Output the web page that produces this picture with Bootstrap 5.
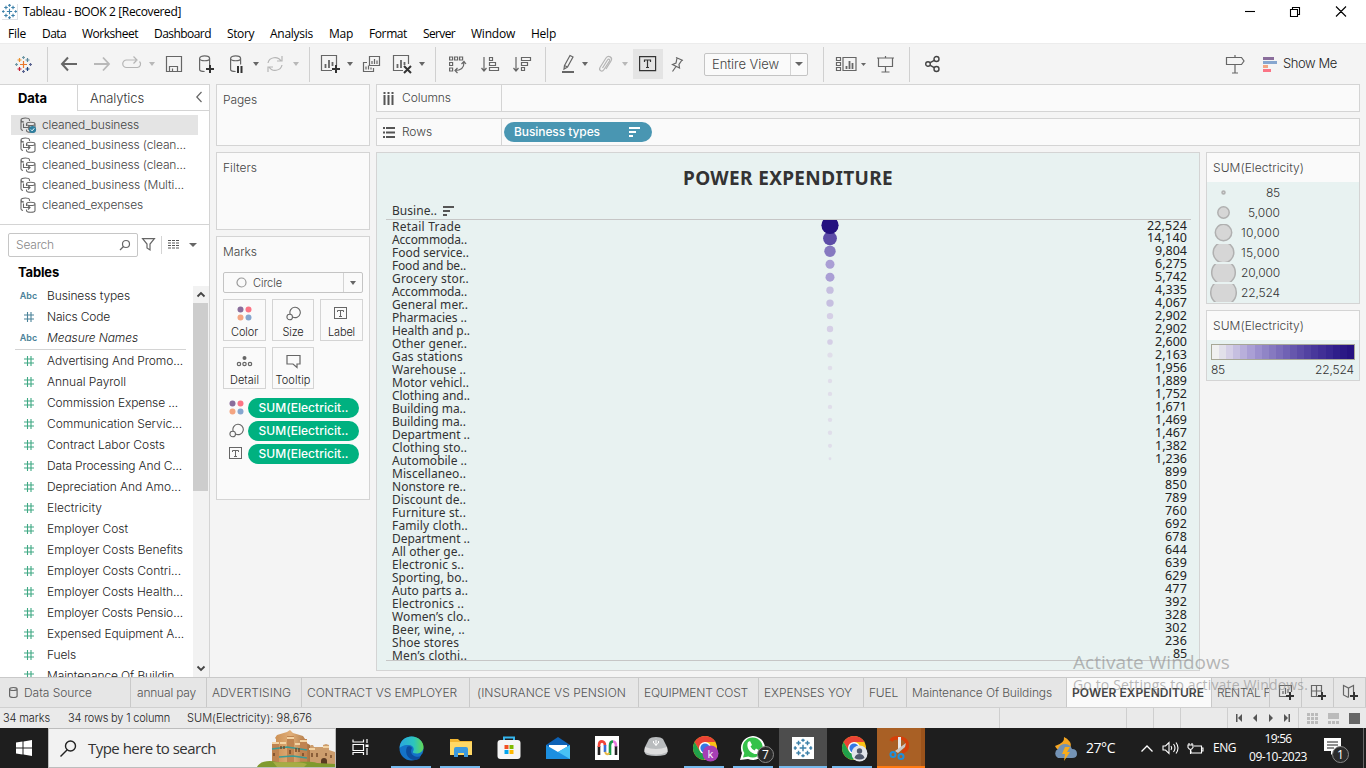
<!DOCTYPE html>
<html lang="en">
<head>
<meta charset="utf-8">
<title>Tableau - BOOK 2 [Recovered]</title>
<meta name="viewport" content="width=device-width, initial-scale=1">
<link href="https://cdn.jsdelivr.net/npm/bootstrap@5.3.0/dist/css/bootstrap.min.css" rel="stylesheet">
<style>
html,body{height:768px;overflow:hidden}
body{font:12px/16px "Open Sans","Noto Sans",sans-serif;color:#333;background:#f4f4f4;width:1366px}
.work,.booktabs,.status,.toolbar{font-family:Inter,"Open Sans",sans-serif;font-weight:300}
svg{display:block;flex:none;overflow:visible}
.t{white-space:pre;display:inline-block;flex:none}
.titlebar{height:23px;background:#fff;color:#000;padding-left:2px}
.menubar{height:20px;background:#fff;color:#000;display:grid;grid-template-columns:34px 40px 72px 73px 43px 59px 40px 54px 48px 60px 40px;padding:2px 0 0 8px;align-items:center;justify-items:start}
.toolbar{height:41px;display:grid;grid-template-columns:46px 2px 42px 24px 36px 4px 40px 24px 36px 4px 34px 8px 18px 24px 16px 26px 36px 4px 22px 22px 44px 20px 26px 20px 14px 26px 14px 32px 26px 132px 2px 54px 14px 34px 12px 1fr 24px 106px 13px;justify-items:center;align-items:center;border-top:1px solid #ececec}
.toolbar>*{flex:none}
.vsep{width:1px;height:35px;background:#d0d0d0}
.caret{width:0;height:0;border:3px solid transparent;border-top:4px solid #666;border-bottom:0}
.caret.off{border-top-color:#b8b8b8}
.caret.big{border-width:4px 4px 0}
.ico{fill:none;stroke:#666;stroke-width:1.2}
.work{height:593px}
.pane{width:210px;background:#fff;border-right:1px solid #d4d4d4;border-top:1px solid #d4d4d4}
.ptabs{height:26px}
.ptabs .tdata{width:77px;padding-left:18px;font-weight:700;color:#000}
.ptabs .tana{border-left:1px solid #d4d4d4;border-bottom:1px solid #d4d4d4;padding:0 7px 0 12px}
.sources{padding:4px 0 0 11px;height:113px}
.src{height:20px;width:187px;padding-left:9px;color:#444}
.src.on{background:#e4e4e4}
.src .t{margin-left:6px}
.rule{height:1px;background:#d4d4d4}
.find{height:23px;margin:8px 0 0 8px}
.sbox{width:130px;height:24px;border:1px solid #c6c6c6;border-radius:2px;padding:0 7px;color:#888}
.tables{height:29px;margin-top:1px;padding:7px 0 0 18px;font-weight:700;color:#000}
.fields{height:391px}
.flist{width:193px;overflow:hidden}
.fld{height:21px;padding:0 0 1px 47px;position:relative;color:#222}
.fld i{position:absolute;left:20px;width:17px;text-align:center;display:flex;justify-content:center;font-style:normal}
.abc{font-size:9px;font-weight:600;color:#4a8299}
.sbar{width:16px;background:#f2f2f2}
.sbar .btnz{height:17px;width:15px}
.sbar .thumb{height:188px;width:15px;background:#cdcdcd}
.panel{border:1px solid #d4d4d4;background:#fafafa}
.shelves{width:154px;margin-left:6px;gap:6px;color:#444}
.shelves>.panel{padding:7px 6px}
.markbtn{height:42px;border:1px solid #d4d4d4;background:#fafafa;color:#222;padding-top:4px}
.markgrid{display:grid;grid-template-columns:43px 42px 43px;column-gap:6px;row-gap:6px;margin-top:6px}
.sel{border:1px solid #c4c4c4;border-radius:2px;background:#fafafa}
.pill{border-radius:10px;height:20px;color:#fff}
.pill .t{font-weight:500}
.pill.green{background:#00b180;width:111px}
.pill.blue{background:#4996b2;width:148px;margin-left:2px}
.enc{height:23px;padding-left:6px}
.enc>svg{width:15px}
.main{margin-left:6px;width:984px;gap:6px}
.shelf{height:28px}
.shelf .hd{width:125px;border-right:1px solid #d4d4d4;padding-left:6px;color:#444}
.viz{width:824px;height:519px;background:#e8f2f1;border:1px solid #d4d4d4;font-weight:400}
.viz h1{font:700 19px/24px "Noto Sans","Open Sans",sans-serif;color:#333;margin:0;padding-top:13px;height:49px}
.colhd{height:17px;padding-left:15px;font-family:"Noto Sans",sans-serif}
.plot{margin:0 8px 0 9px;border-top:1px solid #c6c6c6;border-bottom:1px solid #c6c6c6;height:442px;position:relative}
.vrow{height:13px;padding:0 4px 0 6px;line-height:13px}
.dots + .vrow{margin-top:-1px}
.vrow .t{font-family:"Noto Sans",sans-serif;font-size:12px}
.vrow .t:first-child{margin-top:1px}
.vrow .t:last-child{font-size:12.5px;color:#222}
.vrow + .vrow .t:last-child{margin-top:-1px}
.dots{position:absolute;left:434px;top:0}
.legend .lh{height:29px;padding:7px 6px 0;color:#444}
.legend .lb{background:#e8f2f1}
.sized{height:20px}
.sized .t{margin-left:auto;margin-right:79px}
.ramp{height:16px;margin:0 4px;border:1px solid #a7a796}
.ramp span{flex:1}
.booktabs{height:30px;border-top:1px solid #c9c9c9;background:#e6e6e6;color:#555;display:grid;grid-template-columns:131px 76px 95px 168px 169px 120px 105px 43px 160px 145px 58px 32px 32px 32px}
.booktabs>div{border-right:1px solid #c9c9c9;padding-left:5px;display:flex;align-items:center;overflow:hidden}
.booktabs>.act{background:#fafafa;color:#444;font-weight:600}
.status{height:21px;border-top:1px solid #d0d0d0;background:#eaeaea;display:grid;grid-template-columns:68px 119px 813px 127px 27px 27px 47px 71px 67px}
.status>div{display:flex;align-items:center;height:20px;color:#222}
.status>.b{border-right:1px solid #cfcfcf}
.taskbar{height:40px;background:#1e1e1e;color:#fff}
.startbox{width:48px}
.tsearch{width:288px;background:#f2f2f2;border:1px solid #bdbdbd;color:#333;padding-left:11px;font-size:15px}
.app{width:49px;flex:none}
.app::after{content:"";position:absolute;bottom:0;height:2px;left:4px;right:5px}
.app.run::after{background:#76b9ed}
.app.wide{width:48px}
.app.wide::after{left:0;right:0}
.app.orange::after{background:#ff7a12;right:-4px}
.num{position:absolute;width:17px;height:17px;border-radius:50%;background:#2b2b2b;border:1px solid #888;font-size:12px;line-height:15px;text-align:center}
.watermark{position:absolute;left:1073px;top:650px;color:rgba(140,140,140,.62);pointer-events:none}
</style>
</head>
<body>
<svg width="0" height="0" class="position-absolute">
<defs>
<symbol id="hash" viewBox="0 0 10 11"><path d="M3.500 0v10M7 0v10M0 3h10M0 7h10" fill="none" stroke="currentColor" stroke-width="1.100"/></symbol>
<symbol id="cyl2" viewBox="0 0 16 16"><g fill="none" stroke="#666" stroke-width="1.100"><path d="M3 13.500C1.500 13.300 1 12.800 1 12V3M9.500 4V3c0-2.600-8.500-2.600-8.500 0 0 1.500 1.500 2 3 2"/><path d="M6.500 7c0-2.300 8.500-2.300 8.500 0v6.500c0 2.300-8.500 2.300-8.500 0v-1M6.500 7c0 2 8.500 2 8.500 0M6.500 7v2"/><path d="M3.500 6.500v4h6.500M8 8.500l2 2-2 2"/></g></symbol>
<symbol id="plus" viewBox="0 0 8 8"><path d="M4 0v8M0 4h8" stroke="#333" stroke-width="2"/></symbol>
<symbol id="four" viewBox="0 0 15 15"><circle cx="3.500" cy="3.500" r="3" fill="#8a6d9b"/><circle cx="11.500" cy="3.500" r="3" fill="#fb7485"/><circle cx="3.500" cy="11.500" r="3" fill="#f4a582"/><circle cx="11.500" cy="11.500" r="3" fill="#86a6cf"/></symbol>
<symbol id="sizes" viewBox="0 0 15 15"><g fill="none" stroke="#666" stroke-width="1.100"><path d="M4.200 8.200A5.200 5.200 0 1 1 6.600 11"/><circle cx="3.700" cy="11" r="2.800"/></g></symbol>
<symbol id="tbox" viewBox="0 0 14 13"><rect x=".5" y=".5" width="12" height="11" fill="none" stroke="#666"/><path d="M3.500 5V3.500h6V5M6.500 3.500v6M5 9.500h3" fill="none" stroke="#666"/></symbol>
<symbol id="sortbars" viewBox="0 0 11 10"><path d="M0 1h11M0 5h7M0 9h4" stroke="currentColor" stroke-width="2"/></symbol>
<symbol id="spark" viewBox="0 0 17 17"><path d="M8.500 5.500v6M5.500 8.500h6M4.500 2v4M2.500 4h4M12.500 2v4M10.500 4h4M4.500 11v4M2.500 13h4M12.500 11v4M10.500 13h4M8.500 0v3M7 1.500h3M8.500 14v3M7 15.500h3M0 8.500h3M1.500 7v3M14 8.500h3M15.500 7v3" stroke="#3f82aa" stroke-width="1.300"/></symbol>
<symbol id="chrome" viewBox="0 0 26 26"><circle cx="13" cy="13" r="12" fill="#fbc116"/><path d="M2.600 7A12 12 0 0 1 23.400 7H13l-5.200 9z" fill="#ea4335"/><path d="M2.600 7A12 12 0 0 0 12 25l6.200-9L13 19 7.800 16z" fill="#21a04a"/><circle cx="13" cy="13" r="6" fill="#fff"/><circle cx="13" cy="13" r="4.600" fill="#3478e5"/></symbol>
</defs></svg>

<header>
<div class="titlebar d-flex align-items-center">
<svg width="16" height="16" class="border border-top-0 border-start-0"><use href="#spark" x="0" y="0" width="15" height="15"/></svg>
<span class="t" style="margin-left:5px"><span class="t" data-w="158">Tableau - BOOK 2 [Recovered]</span></span>
<svg class="ms-auto me-3" width="106" height="12"><g fill="none" stroke="#000" stroke-width="1.100"><path d="M1 5.500h10"/><path d="M46.500 3.500h7v7h-7zM48.500 3.500v-2h7v7h-2M92 .5l10 10M102 .5l-10 10"/></g></svg>
</div>
<nav class="menubar">
<span class="t" data-w="18">File</span><span class="t" data-w="24">Data</span><span class="t" data-w="56">Worksheet</span><span class="t" data-w="57">Dashboard</span><span class="t" data-w="27">Story</span><span class="t" data-w="43">Analysis</span><span class="t" data-w="24">Map</span><span class="t" data-w="38">Format</span><span class="t" data-w="32">Server</span><span class="t" data-w="44">Window</span><span class="t" data-w="25">Help</span>
</nav>
</header>

<div class="toolbar">
<svg width="17" height="17"><g stroke-width="1.200"><path d="M8.500 5v7M5 8.500h7" stroke="#e9762b"/><path d="M4.500 2v4M2.500 4h4" stroke="#eb912c"/><path d="M12.500 2v4M10.500 4h4" stroke="#59879b"/><path d="M4.500 11v4M2.500 13h4" stroke="#c72035"/><path d="M12.500 11v4M10.500 13h4" stroke="#1f447e"/><path d="M8.500 0v3M7 1.500h3M0 8.500h3M1.500 7v3" stroke="#7199a6"/><path d="M14 8.500h3M15.500 7v3M8.500 14v3M7 15.500h3" stroke="#5b6591"/></g></svg>
<span class="vsep"></span>
<svg width="16" height="14" class="ico" style="stroke-width:2"><path d="M16 7H1M7 .5L1 7l6 6.500"/></svg>
<svg width="16" height="14" class="ico" style="stroke-width:1.800;stroke:#b8b8b8"><path d="M0 7h15M9 .5L15 7l-6 6.500"/></svg>
<svg width="18" height="12" class="ico" style="stroke:#b5b5b5"><path d="M13 2H3.500a3.500 3.500 0 0 0 0 7.500h11a3.500 3.500 0 0 0 2-6M10.500-1.500L14 2l-3.500 3.500"/></svg>
<span class="caret off"></span>
<svg width="16" height="16" class="ico"><path d="M.5.5h15v15H.5zM3.500 15v-4.500h8V15M6.500 15v-2.500"/></svg>
<svg width="15" height="18" class="ico"><path d="M.6 3.500c0-3.600 10-3.600 10 0v7M.6 3.500c0 3 10 3 10 0M.6 3.500v11c0 1 2 2 5 2"/><use href="#plus" x="7" y="10" width="8" height="8"/></svg>
<svg width="12" height="18" class="ico"><path d="M.6 3.500c0-3.600 10-3.600 10 0v6M.6 3.500c0 3 10 3 10 0M.6 3.500v11c0 1 2 2 5 2"/><path d="M8 11v7M11.500 11v7" stroke="#333" stroke-width="2"/></svg>
<span class="caret"></span>
<svg width="18" height="16" class="ico" style="stroke:#b5b5b5"><path d="M2 7a7 6.500 0 0 1 13-2M16 0v5h-5M16 9a7 6.500 0 0 1-13 2M2 16v-5h5"/></svg>
<span class="caret off"></span>
<span class="vsep"></span>
<svg width="18" height="18" class="ico"><path d="M11 15.500H.5V.5h15V11"/><path d="M4.500 13V9M8 13V5M11.500 11V7" stroke-width="1.800"/><use href="#plus" x="11" y="10" width="8" height="8"/></svg>
<span class="caret"></span>
<svg width="17" height="16" class="ico"><path d="M6.500.5h10v9h-10zM4 6.500H.5v9h10V12M9 8V5M11.500 8V3M14 8V4.500M3 13.500v-3M5.500 13.500v-4M8 13.500V11.500"/></svg>
<svg width="18" height="18" class="ico"><path d="M10 15.500H.5V.5h15V9"/><path d="M4.500 13V9M8 13V5M11.500 10V7" stroke-width="1.800"/><path d="M11 11l7 7M18 11l-7 7" stroke="#333" stroke-width="2"/></svg>
<span class="caret"></span>
<span class="vsep"></span>
<svg width="17" height="17" class="ico"><path d="M.6 1h3v3h-3zM5.600 1h3v3h-3zM10.600 1h3v3h-3zM.6 6.500h3v3h-3zM.6 12h3v3h-3zM6 14.500c6 0 9-3 9-8M12.500 8L15 5.500 17 8M8.500 12L6 14.500 8.500 17"/></svg>
<svg width="18" height="15" class="ico"><path d="M3 0v14M.5 11L3 14l2.500-3M8.500.5h3v3h-3zM8.500 5.500h6v3h-6zM8.500 10.500h9v3h-9z"/></svg>
<svg width="18" height="15" class="ico"><path d="M3 0v14M.5 11L3 14l2.500-3M8.500.5h9v3h-9zM8.500 5.500h6v3h-6zM8.500 10.500h3v3h-3z"/></svg>
<span class="vsep"></span>
<svg width="14" height="18" class="ico"><path d="M3.500 10.500L9 .5l3 1.500-5.500 10-3.500 2zM3.500 10.500l3 1.500"/><path d="M1 17h12" stroke-width="2"/></svg>
<span class="caret"></span>
<svg width="13" height="16" class="ico" style="stroke:#b5b5b5"><path d="M3.500 12L8.500 4c1-1.500 2.800-.5 2 1L5 13.500c-2 3-5.500 1-4-2L7 2c2.500-3.500 7-.5 5 3l-5 8"/></svg>
<span class="caret off"></span>
<span class="d-flex align-items-center justify-content-center" style="width:30px;height:30px;background:#e4e4e4"><svg width="18" height="16" class="ico" style="stroke:#333"><path d="M.6.6h16v14H.6z"/><path d="M5.500 6V4h6v2M8.500 4v7.500M7 11.500h3"/></svg></span>
<svg width="13" height="15" class="ico"><path d="M5 .5l7 3M6 1L5 6 1.500 7.500l7 3.500L8 7.500l3-4.500M5 9.500L1.500 14.500"/></svg>
<span class="sel d-flex align-items-center" style="width:104px;height:23px"><span class="t" style="font-size:13px;color:#444;margin-left:7px;width:78px"><span class="t" data-w="67">Entire View</span></span><span style="width:1px;height:21px;background:#d4d4d4"></span><span class="caret big ms-1"></span></span>
<span class="vsep"></span>
<svg width="30" height="15" class="ico"><path d="M.5.5h4v3h-4zM.5 5.500h4v3h-4zM.5 10.500h4v3h-4zM7 .5h13v13H7z"/><path d="M10.500 12V9M13.500 12V4M16.500 12V6" stroke-width="1.800"/><path d="M25 6l2.500 3L30 6z" fill="#666" stroke="none"/></svg>
<svg width="17" height="17" class="ico"><path d="M0 2h17M1.500 2v8.500h14V2M8.500 0v2M8.500 10.500V16M4.500 16h8"/></svg>
<span class="vsep"></span>
<svg width="15" height="16" class="ico" style="stroke:#444;stroke-width:1.400"><circle cx="3" cy="8" r="2.300"/><circle cx="11.500" cy="3" r="2.500"/><circle cx="11.500" cy="13" r="2.500"/><path d="M5.200 6.700L9.300 4.300M5.200 9.300l4.100 2.400"/></svg>
<span></span>
<svg width="18" height="19" class="ico"><path d="M.5 2.500h15L18 6l-2.500 3.500H.5zM9 0v2.500M9 9.500V18M6 18h6"/></svg>
<span class="d-flex align-items-center"><svg width="14" height="15"><path d="M0 0h11v3H0z" fill="#8a6d9b"/><path d="M0 4h14v3H0z" fill="#86a6cf"/><path d="M0 8h5v3H0z" fill="#f4a582"/><path d="M0 12h8v3H0z" fill="#fb7485"/></svg><span class="t" data-w="54" style="font-size:13px;margin:-2px 0 0 6px;color:#222">Show Me</span></span>
<span></span>
</div>

<div class="work d-flex">
<aside class="pane d-flex flex-column">
<div class="ptabs d-flex"><div class="tdata d-flex align-items-center"><span class="t" data-w="29" style="font-size:13px">Data</span></div>
<div class="tana flex-fill d-flex align-items-center justify-content-between"><span class="t" data-w="54" style="font-size:13px">Analytics</span><svg width="6" height="10" class="ico" style="margin-top:-2px"><path d="M5.500 0L.8 5l4.700 5"/></svg></div></div>
<div class="sources" id="sources"></div>
<div class="rule"></div>
<div class="find d-flex align-items-center"><div class="sbox d-flex align-items-center justify-content-between"><span class="t" data-w="38">Search</span><svg width="10" height="10" class="ico"><circle cx="6" cy="4" r="3.500"/><path d="M3.500 6.500L0 10"/></svg></div>
<svg width="13" height="13" class="ico" style="margin-left:4px"><path d="M.6.6h11.800L8 6v6L5 10V6z"/></svg><span style="height:18px;width:1px;background:#d4d4d4;margin:0 6px"></span>
<svg width="12" height="10"><path d="M0 .5h12M0 3h12M0 5.500h12M0 8h12" stroke="#555" stroke-dasharray="3 1"/></svg><span class="caret big" style="margin-left:9px"></span></div>
<div class="tables"><span class="t" data-w="41" style="font-size:13px">Tables</span></div>
<div class="fields d-flex"><div class="flist" id="flist"></div>
<div class="sbar"><div class="btnz d-flex align-items-center justify-content-center"><svg width="8" height="5"><path d="M.5 4.500L4 1l3.500 3.500" fill="none" stroke="#444" stroke-width="1.800"/></svg></div><div class="thumb"></div><div class="btnz d-flex align-items-center justify-content-center" style="margin-top:169px"><svg width="8" height="5"><path d="M.5.5L4 4 7.500.5" fill="none" stroke="#444" stroke-width="1.800"/></svg></div></div></div>
</aside>

<section class="shelves d-flex flex-column">
<div class="panel" style="height:62px"><span class="t" data-w="34">Pages</span></div>
<div class="panel" style="height:78px"><span class="t" data-w="34">Filters</span></div>
<div class="panel" style="height:264px"><span class="t" data-w="34">Marks</span>
<div class="sel d-flex align-items-center" style="height:21px;margin-top:12px;padding-left:12px"><svg width="11" height="11" class="ico" style="stroke:#999"><circle cx="5.500" cy="5.500" r="4.500"/></svg><span class="t" style="margin-left:6px;width:90px;font-size:11px"><span class="t" data-w="29">Circle</span></span><span style="width:1px;height:19px;background:#d4d4d4"></span><span class="caret" style="margin-left:6px"></span></div>
<div class="markgrid">
<div class="markbtn d-flex flex-column align-items-center"><svg width="17" height="19"><use href="#four" x="1" y="2" width="15" height="15"/></svg><span class="t" data-w="27" style="font-size:11px;margin-top:1px">Color</span></div>
<div class="markbtn d-flex flex-column align-items-center"><svg width="17" height="19"><use href="#sizes" x="1" y="2" width="15" height="15"/></svg><span class="t" data-w="21" style="font-size:11px;margin-top:1px">Size</span></div>
<div class="markbtn d-flex flex-column align-items-center"><svg width="17" height="19"><use href="#tbox" x="1" y="3" width="14" height="13"/></svg><span class="t" data-w="27" style="font-size:11px;margin-top:1px">Label</span></div>
<div class="markbtn d-flex flex-column align-items-center"><svg width="17" height="19" class="ico"><circle cx="8.500" cy="6" r="2" fill="#666" stroke="none"/><circle cx="3" cy="12" r="1.700"/><circle cx="8.500" cy="12" r="1.700"/><circle cx="14" cy="12" r="1.700"/></svg><span class="t" data-w="29" style="font-size:11px;margin-top:1px">Detail</span></div>
<div class="markbtn d-flex flex-column align-items-center"><svg width="17" height="19" class="ico"><path d="M2 3.500h13v8.500h-3v3.500L8 12H2z"/></svg><span class="t" data-w="35" style="font-size:11px;margin-top:1px">Tooltip</span></div>
</div>
<div style="margin-top:7px">
<div class="enc d-flex align-items-center"><svg width="15" height="15"><use href="#four" width="15" height="15"/></svg><div class="pill green d-flex align-items-center justify-content-center ms-1"><span class="t" data-w="90">SUM(Electricit..</span></div></div>
<div class="enc d-flex align-items-center"><svg width="15" height="15"><use href="#sizes" width="15" height="15"/></svg><div class="pill green d-flex align-items-center justify-content-center ms-1"><span class="t" data-w="90">SUM(Electricit..</span></div></div>
<div class="enc d-flex align-items-center"><svg width="15" height="13"><use href="#tbox" width="14" height="13"/></svg><div class="pill green d-flex align-items-center justify-content-center ms-1"><span class="t" data-w="90">SUM(Electricit..</span></div></div>
</div></div>
</section>

<main class="main d-flex flex-column">
<div class="shelf panel d-flex"><div class="hd d-flex align-items-center"><svg width="12" height="13"><path d="M1.500 0v2M5.500 0v2M9.500 0v2M1.500 3v10M5.500 3v10M9.500 3v10" stroke="#555" stroke-width="2"/></svg><span class="t" data-w="49" style="margin-left:7px">Columns</span></div></div>
<div class="shelf panel d-flex align-items-center"><div class="hd d-flex align-items-center h-100"><svg width="12" height="11"><path d="M0 1h2M0 5.500h2M0 10h2M3 1h9M3 5.500h9M3 10h9" stroke="#555" stroke-width="1.800"/></svg><span class="t" data-w="30" style="margin-left:7px">Rows</span></div>
<div class="pill blue d-flex align-items-center justify-content-between" style="padding:0 12px 0 10px"><span class="t" data-w="86">Business types</span><svg width="11" height="10"><use href="#sortbars" width="11" height="10"/></svg></div></div>
<div class="d-flex" style="gap:6px">
<div class="viz">
<h1 class="text-center"><span class="t" data-w="210">POWER EXPENDITURE</span></h1>
<div class="colhd d-flex align-items-center"><span class="t" data-w="45">Busine..</span><svg width="11" height="10" style="margin-left:6px;color:#555"><use href="#sortbars" width="11" height="10"/></svg></div>
<div class="plot" id="plot"></div>
</div>
<div class="d-flex flex-column" style="width:154px;gap:6px">
<div class="legend panel" style="height:152px"><div class="lh"><span class="t" data-w="91">SUM(Electricity)</span></div><div class="lb" id="sizes-legend" style="height:121px;padding-top:1px"></div></div>
<div class="legend panel" style="height:71px"><div class="lh"><span class="t" data-w="91">SUM(Electricity)</span></div><div class="lb" style="height:40px;padding-top:4px"><div class="ramp d-flex" id="ramp"></div><div class="d-flex justify-content-between" style="padding:2px 5px 0 4px;color:#333"><span class="t" data-w="14">85</span><span class="t" data-w="39">22,524</span></div></div></div>
</div></div>
</main>
</div>

<nav class="booktabs">
<div style="padding-left:9px"><svg width="9" height="11" class="ico" style="margin-right:6px"><path d="M.6 2c0-2 7.500-2 7.500 0v7c0 2-7.500 2-7.500 0zM.6 2c0 2 7.500 2 7.500 0"/></svg><span class="t" data-w="68">Data Source</span></div>
<div style="padding-left:6px"><span class="t" data-w="59">annual pay</span></div>
<div><span class="t" data-w="79">ADVERTISING</span></div>
<div><span class="t" data-w="150">CONTRACT VS EMPLOYER</span></div>
<div style="padding-left:7px"><span class="t" data-w="149">(INSURANCE VS PENSION</span></div>
<div><span class="t" data-w="104">EQUIPMENT COST</span></div>
<div><span class="t" data-w="88">EXPENSES YOY</span></div>
<div><span class="t" data-w="29">FUEL</span></div>
<div><span class="t" data-w="140">Maintenance Of Buildings</span></div>
<div class="act"><span class="t" data-w="132">POWER EXPENDITURE</span></div>
<div><span class="t" data-w="60">RENTAL FE</span></div>
<div style="padding-left:8px"><svg width="17" height="16" class="ico"><path d="M8 11.500H1.500v-11h12V7M5 9V6M7.500 9V3M10 8V4"/><use href="#plus" x="8" y="7" width="8" height="8"/></svg></div>
<div style="padding-left:8px"><svg width="17" height="16" class="ico"><path d="M8 11.500H1.500v-11h10V7M1.500 6h10M6.500.5v11"/><use href="#plus" x="8" y="7" width="8" height="8"/></svg></div>
<div style="padding-left:8px"><svg width="17" height="16" class="ico"><path d="M6.500 12.500L1.500 10V.5l5 2.500 5-2.500V7M6.500 3v9.500"/><use href="#plus" x="8" y="7" width="8" height="8"/></svg></div>
</nav>
<footer class="status">
<div style="padding-left:3px"><span class="t" data-w="47" style="font-size:11px">34 marks</span></div><div><span class="t" data-w="102" style="font-size:11px">34 rows by 1 column</span></div><div class="b"><span class="t" data-w="125" style="font-size:11px">SUM(Electricity): 98,676</span></div><div class="b"></div><div class="b"></div><div class="b"></div><div class="b"></div>
<div class="b" style="padding-left:8px"><svg width="56" height="8"><path d="M0 0h1.500v8H0zM6 0v8L2 4zM21 0v8l-4-4zM33 0v8l4-4zM48 0v8l4-4zM52.500 0H54v8h-1.500z" fill="#555"/></svg></div>
<div style="padding-left:8px"><svg width="54" height="11"><path d="M0 1.500h11M0 5.500h11M0 9.500h11" stroke="#bbb" stroke-width="3" stroke-dasharray="3 1"/><path d="M21 0h11v6H21zM21 8h3v3h-3zM25 8h3v3h-3zM29 8h3v3h-3z" fill="#bbb"/><path d="M42 0h11v11H42z" fill="#666"/></svg></div>
</footer>

<div class="taskbar d-flex align-items-stretch">
<div class="startbox d-flex align-items-center justify-content-center"><svg width="16" height="16"><path d="M0 2.500L6.500 1.500v6H0zM7.500 1.400L16 0v7.500H7.500zM0 8.500h6.500v6L0 13.500zM7.500 8.500H16V16l-8.500-1.400z" fill="#fff"/></svg></div>
<div class="tsearch d-flex align-items-center"><svg width="17" height="17" fill="none" stroke="#222" stroke-width="1.400"><circle cx="10.500" cy="6" r="5"/><path d="M7 10L.5 16.500"/></svg><span class="t" data-w="128" style="margin-left:11px">Type here to search</span>
<svg class="ms-auto align-self-end" width="78" height="37" viewBox="0 0 78 37"><defs><linearGradient id="stone"><stop stop-color="#c98b4e"/><stop offset=".5" stop-color="#e0ae78"/><stop offset="1" stop-color="#a9713f"/></linearGradient></defs><path d="M51 17l3-2h2l1 2h9v-2l3-1 3 1v5l6 2v15H50z" fill="#cc9d6d"/><path d="M15 15l4-1V9l-1-1 2-3 10-3 3-2 3 3 10 3 2 3v3l5 3v22H15z" fill="url(#stone)"/><path d="M15 13h7v24h-7zM30 6h7v31h-7zM43 9h7v28h-7z" fill="#c08450"/><path d="M15 13h7M30 8h7M43 11h7M23 13h6M38 14h5M52 19h6M66 17h6" stroke="#f3d3a3" stroke-width="2"/><path d="M15 19l15-2 20 3M22 27l14-1 14 2" fill="none" stroke="#3d9a93" stroke-width="1.300"/><path d="M24 16v3M27 16v3M39 18v4M42 18v4M17 23v3M33 20v4M46 23v3M55 23v4M60 23v4M69 23v3M74 25v3" stroke="#6f4525" stroke-width="1.400"/><path d="M64 37v-6a3 3 0 0 1 6 0v6z" fill="#5a3a22"/><path d="M0 37c3-6 12-7 20-5 12 2 30-2 40 1l18 1v3z" fill="#7f9a2e"/><path d="M16 32c14 1 26-1 34 2l-3 3H20z" fill="#a6ad45"/></svg></div>
<div class="app position-relative d-flex align-items-center justify-content-center" style="margin-right:2px"><svg width="17" height="16" fill="none" stroke="#fff" stroke-width="1.200" style="margin-top:-2px"><path d="M1 .5v2.500h10.500V.5M1 5.500h10.500v6H1zM1 16v-2.500h10.500V16M15 0v4M15 9v7"/><path d="M13.500 5.500h3v2.500h-3z" fill="#fff" stroke="none"/></svg></div>
<div class="app run position-relative d-flex align-items-center justify-content-center"><svg width="25" height="25" viewBox="0 0 25 25"><defs><linearGradient id="eg"><stop stop-color="#2aa7e0"/><stop offset=".6" stop-color="#2cc5bd"/><stop offset="1" stop-color="#63d854"/></linearGradient></defs><circle cx="12.500" cy="12.500" r="12" fill="#1473c8"/><path d="M8 11c-3 7 2 13 8 13 3 0 6-2 7-4-5 2-11 0-11-5 0-1 .5-2 1-3-1-2-4-2-5-1z" fill="#0c4d9e"/><path d="M22.500 18.500l3 1v3h-5z" fill="#1e1e1e"/><path d="M.6 12C1 4 7 .5 12.500.5 20 .5 24.500 6 24.500 11c0 4-3 6.500-7 6.500-3 0-4-1-3.500-2 1.500-2 1-6-4-6.500C5 8.500 1 11 .6 12z" fill="url(#eg)"/></svg></div>
<div class="app run position-relative d-flex align-items-center justify-content-center"><svg width="22" height="20" style="margin-top:-2px"><path d="M0 2h8l2 2h12v14H0z" fill="#f2b632"/><path d="M0 5h22v13H0z" fill="#ffd866"/><path d="M4 20v-8q0-2 2-2h10q2 0 2 2v8h-4v-4H8v4z" fill="#3c9adf"/></svg></div>
<div class="app position-relative d-flex align-items-center justify-content-center" style="margin-left:-1px"><svg width="24" height="24"><path d="M7 6V1.500h10V6" fill="none" stroke="#35b5ed" stroke-width="2"/><rect x=".5" y="4" width="23" height="19" rx="3" fill="#f5f5f5"/><path d="M7.500 9h4v4h-4z" fill="#f25022"/><path d="M12.500 9h4v4h-4z" fill="#7fba00"/><path d="M7.500 14h4v4h-4z" fill="#00a4ef"/><path d="M12.500 14h4v4h-4z" fill="#ffb900"/></svg></div>
<div class="app position-relative d-flex align-items-center justify-content-center"><svg width="24" height="22"><path d="M0 8L12 0l12 8v6H0z" fill="#0d62b5"/><path d="M3 8h18v8H3z" fill="#fff"/><path d="M0 8l12 7 12-7v14H0z" fill="#1c8fe0"/><path d="M24 8v14L12 15z" fill="#48c2f5"/></svg></div>
<div class="app position-relative d-flex align-items-center justify-content-center"><svg width="24" height="24"><path d="M0 0h24v24H0z" fill="#fff"/><g fill="none" stroke-width="2.600"><path d="M4 19v-9M21 19v-9" stroke="#222"/><path d="M4 11V9.500c0-5.500 6-5.500 6 0" stroke="#f04438"/><path d="M10 9v7" stroke="#3a6fd8"/><path d="M15 19V9.500c0-2.500 1-4 3-4" stroke="#1a9a4b"/><path d="M18 5.500c2 0 3 1.500 3 5" stroke="#e879dd"/><path d="M10 16q2 4 4.500 1" stroke="#e9b949" stroke-width="2"/></g></svg></div>
<div class="app position-relative d-flex align-items-center justify-content-center"><svg width="24" height="20" style="margin-top:-2px"><path d="M5 2q2-2 7-2t7 2l4 8q2 6-2 8-9 2-18 0-4-2-2-8z" fill="#b9bcbe"/><path d="M1 10q11 4 22 0l.5 5Q12 20 .5 15z" fill="#dedede"/><path d="M12 3v6M9.500 4v2L12 8l2.500-2V4" fill="none" stroke="#fff"/></svg></div>
<div class="app run position-relative d-flex align-items-center justify-content-center"><svg width="26" height="27"><use href="#chrome" width="26" height="26"/><circle cx="18.500" cy="18.500" r="8" fill="#a63fb5"/><text x="15.500" y="22.500" fill="#fff" font-size="11">k</text></svg></div>
<div class="app run position-relative d-flex align-items-center justify-content-center" style="margin-right:1px"><svg width="25" height="25" style="margin-left:-2px"><path d="M0 24l2-7A12 12 0 1 1 8 23z" fill="#fff"/><path d="M3 21.500l1.300-4.500a10 10 0 1 1 4 3.500z" fill="#35c24a"/><path d="M8 6l2-1 2 4-1.500 1.500q1.500 3 4 4l1.500-2 3.500 2c0 3-3 4-5 3.500C9 16 6 11 8 6z" fill="#fff"/></svg><span class="num" style="left:28px;top:18px">7</span></div>
<div class="app run wide position-relative d-flex align-items-center justify-content-center" style="background:#4d4d4d;margin-right:1px"><svg width="22" height="22" style="margin-left:-1px;margin-top:-1px"><path d="M0 0h22v22H0z" fill="#fff"/><use href="#spark" x="1.500" y="1.500" width="19" height="19"/></svg></div>
<div class="app run position-relative d-flex align-items-center justify-content-center"><svg width="26" height="27" style="margin-left:2px"><use href="#chrome" width="26" height="26"/><circle cx="18.500" cy="18.500" r="8" fill="#e2e5ea"/><circle cx="18.500" cy="16" r="2.700" fill="#50596c"/><path d="M13.500 23q1-4 5-4t5 4q-5 3-10 0z" fill="#50596c"/></svg></div>
<div class="app wide orange position-relative d-flex align-items-center justify-content-center" style="background:#a96025;border-right:4px solid #9b531b"><svg width="20" height="25"><path d="M2 5c2-4 14-5 16 2 1 5-1 8-5 9" fill="none" stroke="#d63e08" stroke-width="3.500"/><path d="M9 1h3v13l-3-1z" fill="#e8e8e8"/><path d="M17 7l-1 4-7 6-3-2z" fill="#c8c8c8"/><circle cx="4" cy="18.500" r="2.500" fill="none" stroke="#1e90dc" stroke-width="2"/><circle cx="12" cy="20.500" r="2.500" fill="none" stroke="#1e90dc" stroke-width="2"/></svg></div>
<div class="d-flex align-items-center ms-auto flex-shrink-0">
<svg width="25" height="25" viewBox="0 0 25 25"><path d="M11 1q1 6-9 9 3 7 12 5 6-4 3-9-3-4-6-5z" fill="#f5a623"/><path d="M5 22a5 5 0 0 1 0-9q2-5 7-5t7 5q5 0 5 5 0 4-5 4z" fill="#7493b5"/><path d="M12 11h5l-3 5h3l-6 9 1-7H9z" fill="#f8ac1c"/></svg>
<span class="t" data-w="29" style="font-size:14px;margin-left:8px">27°C</span>
<svg width="12" height="7" style="margin-left:26px" fill="none" stroke="#fff" stroke-width="1.300"><path d="M.5 6.500L6 1l5.500 5.500"/></svg>
<svg width="17" height="14" style="margin-left:9px" fill="none" stroke="#fff" stroke-width="1.100"><path d="M1 5h2.500L7 1.500v11L3.500 9H1zM9 5q1.500 2 0 4M11.500 3q3 4 0 8M14 1.500q4 5.500 0 11"/></svg>
<svg width="16" height="13" style="margin-left:8px" fill="none" stroke="#fff" stroke-width="1.100"><path d="M7 4h7.500v7H4V8.500M14.500 6H16v3h-1.500M1 3h5v2.500q-2.500 4-5 0zM2 1v2M5 1v2M3.500 7v5"/></svg>
<span class="t" data-w="23" style="margin-left:10px">ENG</span>
<span class="text-center" style="margin-left:13px;width:58px;line-height:18px;margin-top:-1px"><span class="t" data-w="27">19:56</span><br><span class="t" data-w="58">09-10-2023</span></span>
<span class="position-relative" style="margin:-3px 22px 0 17px"><svg width="17" height="17"><path d="M0 0h17v13h-6l-4 4v-4H0z" fill="#fff"/><path d="M3 4h11M3 7h11M3 10h7" stroke="#222"/></svg><span class="num" style="left:8px;top:8px">1</span></span>
<span style="width:1px;height:40px;background:#666;margin-right:2px"></span>
</div>
</div>

<div class="watermark"><div style="font-size:19px;line-height:24px"><span class="t" data-w="157">Activate Windows</span></div><div style="font-size:14px;line-height:22px"><span class="t" data-w="235">Go to Settings to activate Windows.</span></div></div>

<script src="https://cdn.jsdelivr.net/npm/bootstrap@5.3.0/dist/js/bootstrap.bundle.min.js"></script>
<script>
const $ = id => document.getElementById(id);
const txt = (s, w, extra = '') => `<span class="t" data-w="${w}" ${extra}>${s}</span>`;

$('sources').innerHTML = [['cleaned_business',97],['cleaned_business (clean...',144],['cleaned_business (clean...',144],['cleaned_business (Multi...',142],['cleaned_expenses',101]]
  .map(([s,w],i) => `<div class="src d-flex align-items-center ${i?'':'on'}"><svg width="16" height="16"><use href="#cyl2" width="16" height="16"/>${i?'':'<circle cx="12.5" cy="12.500" r="3.600" fill="#2e7f9f"/><path d="M10.800 12.500l1.300 1.300 2.200-2.500" fill="none" stroke="#fff"/>'}</svg>${txt(s,w)}</div>`).join('');

const fields = [['Business types',83,'abc'],['Naics Code',63,'#4a8299'],['Measure Names',91,'abc','fst-italic'],null,
 ['Advertising And Promo...',136],['Annual Payroll',79],['Commission Expense ...',131],['Communication Servic...',135],['Contract Labor Costs',118],['Data Processing And C...',135],['Depreciation And Amo...',134],['Electricity',55],['Employer Cost',81],['Employer Costs Benefits',136],['Employer Costs Contri...',134],['Employer Costs Health...',136],['Employer Costs Pensio...',136],['Expensed Equipment A...',137],['Fuels',29],['Maintenance Of Buildin...',137]];
$('flist').innerHTML = fields.map(f => !f ? '<div class="rule" style="margin:0 7px 1px 15px"></div>' :
  `<div class="fld d-flex align-items-center ${f[3]||''}"><i>${f[2]==='abc' ? '<span class="abc">Abc</span>' : `<svg width="10" height="11" style="color:${f[2]||'#3fa883'}"><use href="#hash" width="10" height="11"/></svg>`}</i>${txt(f[0],f[1])}</div>`).join('');

const rows = [['Retail Trade',69,22524],['Accommoda..',75,14140],['Food service..',77,9804],['Food and be..',74,6275],['Grocery stor..',77,5742],['Accommoda..',75,4335],['General mer..',76,4067],['Pharmacies ..',75,2902],['Health and p..',78,2902],['Other gener..',75,2600],['Gas stations',71,2163],['Warehouse ..',74,1956],['Motor vehicl..',77,1889],['Clothing and..',78,1752],['Building ma..',74,1671],['Building ma..',74,1469],['Department ..',78,1467],['Clothing sto..',75,1382],['Automobile ..',75,1236],['Miscellaneo..',74,899],['Nonstore re..',74,850],['Discount de..',74,789],['Furniture st..',74,760],['Family cloth..',76,692],['Department ..',78,678],['All other ge..',72,644],['Electronic s..',72,639],['Sporting, bo..',76,629],['Auto parts a..',76,477],['Electronics ..',72,392],['Women’s clo..',78,328],['Beer, wine, ..',73,302],['Shoe stores',67,236],['Men’s clothi..',75,85]];
const ramp = ['#f0f0f0','#e2e0ea','#d5cfe6','#c6bfe0','#b8afdb','#aa9fd5','#9c90ce','#9085c6','#8679c0','#7b6dba','#7062b4','#6657ad','#5c4ca7','#5242a1','#48389b','#412f96','#382791','#2f1e8a','#2a1885','#251280'];
const colors = ['#251280','#5c4ca7','#8679c0','#aa9fd5','#aa9fd5','#c6bfe0','#c6bfe0','#d5cfe6','#d5cfe6','#d5cfe6'];
const widths = {2:14,3:22,5:32,6:40};
const radii = [8.600,6.900,5.700,4.500,4.500,3.700,3.700,3.200,3.200,2.800,2.600,2.300,2.200,2.200,2.200,2.200,2.200,2.100,1.400];
$('plot').innerHTML = `<svg class="dots" width="20" height="440"><defs><clipPath id="cp"><path d="M0 0h20v440H0z"/></clipPath></defs><g clip-path="url(#cp)">${radii.map((r,i)=>[r,i]).reverse().map(([r,i]) => `<circle cx="10" cy="${(5.300+12.970*i).toFixed(2)}" r="${r}" fill="${colors[i]||'#e0deea'}"/>`).join('')}</g></svg>` +
  rows.map(([s,w,v]) => { const n = v.toLocaleString('en-US'); return `<div class="vrow d-flex justify-content-between">${txt(s,w)}${txt(n,widths[n.length])}</div>`; }).join('');

$('ramp').innerHTML = ramp.map(c => `<span style="background:${c}"></span>`).join('');
$('sizes-legend').innerHTML = [['85',14,1.500],['5,000',32,5.700],['10,000',39,8.200],['15,000',39,10.300],['20,000',39,11.800],['22,524',39,12.800]]
  .map(([s,w,r]) => `<div class="sized d-flex align-items-center"><svg width="32" height="18" style="overflow:hidden;color:#444"><circle cx="16.500" cy="8.500" r="${r}" fill="#d6d6d6" stroke="#b0b0b0" stroke-width="1.500"/></svg>${txt(s,w)}</div>`).join('');

// Track each label so that it fills the width listed in data-w.
document.querySelectorAll('[data-w]').forEach(e => {
  const now = e.getBoundingClientRect().width, n = e.textContent.length;
  e.style.letterSpacing = ((+e.dataset.w - now) / n).toFixed(3) + 'px';
});
</script>
</body>
</html>
